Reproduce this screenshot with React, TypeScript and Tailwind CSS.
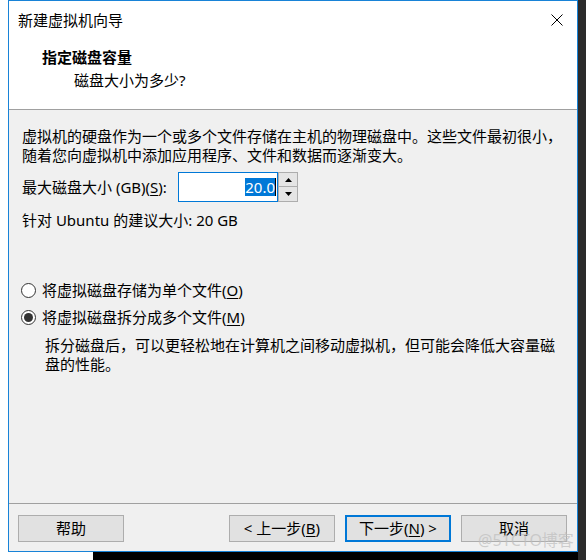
import React from 'react';

const font = "font-['Noto_Sans','Noto_Sans_CJK_SC',sans-serif]";

function Mnemonic({ pre, letter, post = ')' }: { pre: string; letter: string; post?: string }) {
  return (
    <span>
      {pre}(<span className="underline underline-offset-2">{letter}</span>{post}
    </span>
  );
}

function Radio({ checked, children }: { checked?: boolean; children: React.ReactNode }) {
  return (
    <div className="flex items-center h-[19px] leading-[19px]">
      <div className="w-[15px] h-[15px] rounded-full border border-[#333] bg-white flex items-center justify-center">
        {checked && <div className="w-[9px] h-[9px] rounded-full bg-[#333]" />}
      </div>
      <div className="ml-[6px]">{children}</div>
    </div>
  );
}

function Button({ children, primary }: { children: React.ReactNode; primary?: boolean }) {
  return (
    <div
      className={`w-[106px] h-[27px] flex items-center justify-center bg-[#e1e1e1] ${
        primary ? 'border-2 border-[#0078d7]' : 'border border-[#adadad]'
      }`}
    >
      {children}
    </div>
  );
}

export default function App() {
  return (
    <div className={`w-[586px] h-[560px] flex bg-white overflow-hidden relative text-black text-[15px] ${font}`}>
      <div className="w-[578px] flex flex-col">
        <div className="flex">
          <div className="w-[8px]" />
          {/* wizard window */}
          <div className="w-[570px] h-[552px] border border-[#1883d7] flex flex-col">
            <div className="h-[108px] bg-white flex flex-col">
              <div className="h-[38px] flex items-center justify-between pl-[9px] pr-[14px]">
                <span>新建虚拟机向导</span>
                <svg width="12" height="12" viewBox="0 0 12 12">
                  <path d="M0.5 0.5 L11.5 11.5 M11.5 0.5 L0.5 11.5" stroke="#000" strokeWidth="1" fill="none" />
                </svg>
              </div>
              <div className="mt-[8px] pl-[33px] leading-[20px] font-bold">指定磁盘容量</div>
              <div className="mt-[3px] pl-[65px] leading-[20px]">磁盘大小为多少?</div>
            </div>
            <div className="h-px bg-[#a0a0a0]" />

            <div className="h-[393px] bg-[#f0f0f0] flex flex-col pt-[17px] pl-[13px] leading-[19px]">
              <div>
                虚拟机的硬盘作为一个或多个文件存储在主机的物理磁盘中。这些文件最初很小，
                <br />
                随着您向虚拟机中添加应用程序、文件和数据而逐渐变大。
              </div>

              <div className="mt-[7px] h-[30px] flex items-center">
                <div className="w-[156px]">
                  最大磁盘大小 (GB)<Mnemonic pre="" letter="S" post="):" />
                </div>
                <div className="w-[100px] h-[30px] bg-white border border-[#0078d7] flex items-center justify-end pr-[1px]">
                  <span className="bg-[#0078d7] text-white leading-[18px]">20.0</span>
                  <div className="w-px h-[18px] bg-black" />
                </div>
                <div className="w-[20px] h-[30px] flex flex-col">
                  <div className="h-[15px] border border-[#adadad] bg-[#e5e5e5] flex items-center justify-center">
                    <svg width="7" height="4" viewBox="0 0 7 4">
                      <path d="M3.5 0 L7 4 L0 4 Z" fill="#000" />
                    </svg>
                  </div>
                  <div className="h-[15px] border border-t-0 border-[#adadad] bg-[#e5e5e5] flex items-center justify-center">
                    <svg width="7" height="4" viewBox="0 0 7 4">
                      <path d="M0 0 L7 0 L3.5 4 Z" fill="#000" />
                    </svg>
                  </div>
                </div>
              </div>

              <div className="mt-[9px]">针对 Ubuntu 的建议大小: 20 GB</div>

              <div className="mt-[51px] -ml-[1px]">
                <Radio>
                  <Mnemonic pre="将虚拟磁盘存储为单个文件" letter="O" />
                </Radio>
              </div>
              <div className="mt-[8px] -ml-[1px]">
                <Radio checked>
                  <Mnemonic pre="将虚拟磁盘拆分成多个文件" letter="M" />
                </Radio>
              </div>
              <div className="mt-[9px] pl-[23px]">
                拆分磁盘后，可以更轻松地在计算机之间移动虚拟机，但可能会降低大容量磁
                <br />
                盘的性能。
              </div>
            </div>

            <div className="h-px bg-[#a0a0a0]" />
            <div className="flex-1 bg-[#f0f0f0] flex pt-[11px] pl-[9px] pr-[10px]">
              <Button>帮助</Button>
              <div className="flex-1" />
              <div className="flex gap-[10px]">
                <Button>
                  <span>
                    &lt; 上一步(<span className="underline underline-offset-2">B</span>)
                  </span>
                </Button>
                <Button primary>
                  <span>
                    下一步(<span className="underline underline-offset-2">N</span>) &gt;
                  </span>
                </Button>
                <Button>取消</Button>
              </div>
            </div>
          </div>
        </div>
        <div className="flex-1 flex">
          <div className="w-[93px] bg-white" />
          <div className="flex-1 bg-black" />
        </div>
      </div>
      <div className="flex-1 bg-[#2b2b2b]" />

      {/* watermark */}
      <div className="absolute left-[478px] top-[530px] text-[16px] leading-[20px] text-[#bdbdbd]/70 pointer-events-none">
        @51CTO博客
      </div>
    </div>
  );
}
